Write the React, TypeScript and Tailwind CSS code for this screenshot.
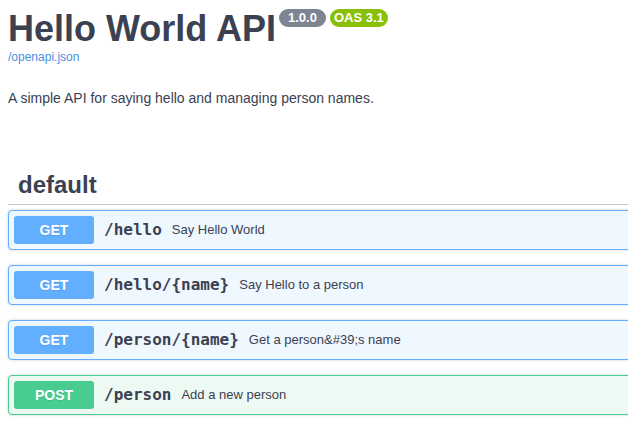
import React from "react";

type Op = { method: "GET" | "POST"; path: string; desc: string };

const ops: Op[] = [
  { method: "GET", path: "/hello", desc: "Say Hello World" },
  { method: "GET", path: "/hello/{name}", desc: "Say Hello to a person" },
  { method: "GET", path: "/person/{name}", desc: "Get a person&#39;s name" },
  { method: "POST", path: "/person", desc: "Add a new person" },
];

function OpBlock({ op }: { op: Op }) {
  const isGet = op.method === "GET";
  return (
    <div
      className={
        "mb-[15px] flex items-center rounded-[4px] border p-[5px] shadow-[0_0_3px_rgba(0,0,0,0.19)] " +
        (isGet ? "border-[#61affe] bg-[#eff7ff]" : "border-[#49cc90] bg-[#edfaf4]")
      }
    >
      <span
        className={
          "w-[80px] rounded-[3px] py-[6px] text-center text-[14px] font-bold leading-[16px] text-white text-shadow-[0_1px_0_rgba(0,0,0,0.1)] " +
          (isGet ? "bg-[#61affe]" : "bg-[#49cc90]")
        }
      >
        {op.method}
      </span>
      <span className="px-[10px] text-[16px] font-bold leading-[20px] text-[#3b4151] [font-family:'DejaVu_Sans_Mono',monospace]">
        {op.path}
      </span>
      <span className="text-[13px] leading-[16px] text-[#3b4151]">{op.desc}</span>
    </div>
  );
}

export default function App() {
  return (
    <div className="h-[428px] w-[628px] overflow-hidden bg-white [font-family:'Liberation_Sans',Arial,sans-serif]">
      <div className="w-[1000px] pl-[8px] pt-[8px]">
        <div className="flex items-start">
          <h2 className="text-[36px] font-bold leading-[41px] text-[#3b4151]">Hello World API</h2>
          <span className="ml-[3px] mt-[1px] rounded-[57px] bg-[#7d8492] px-[9px] py-[2px] text-[13px] font-bold leading-[14px] text-white">
            1.0.0
          </span>
          <span className="ml-[4px] mt-[1px] rounded-[57px] bg-[#89bf04] px-[4px] py-[2px] text-[13px] font-bold leading-[14px] text-white">
            OAS 3.1
          </span>
        </div>
        <div className="mt-[1px] text-[12px] leading-[14px] text-[#4990e2]">/openapi.json</div>
        <p className="mt-[24px] text-[14px] leading-[20px] text-[#3b4151]">
          A simple API for saying hello and managing person names.
        </p>
        <h3 className="mt-[63px] border-b border-[#c4c6cb] pb-[5px] pl-[10px] text-[24px] font-bold leading-[28px] text-[#3b4151]">
          default
        </h3>
        <div className="mt-[5px]">
          {ops.map((op) => (
            <OpBlock key={op.path} op={op} />
          ))}
        </div>
      </div>
    </div>
  );
}
